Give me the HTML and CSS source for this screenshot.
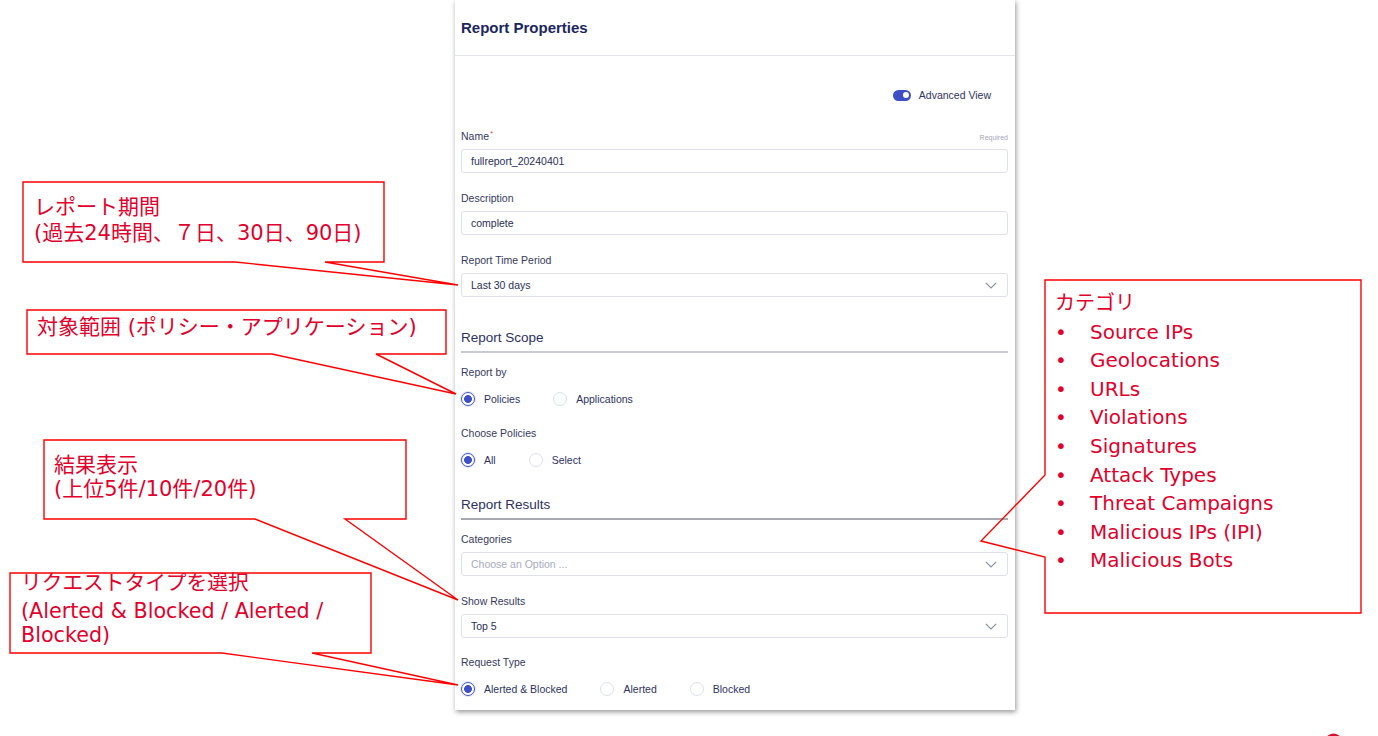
FILE: index.html
```html
<!DOCTYPE html>
<html lang="ja">
<head>
<meta charset="utf-8">
<title>Report Properties</title>
<link rel="stylesheet" href="styles.css">
</head>
<body>
<div class="stage">
  <section class="panel">
    <header class="panel-head"><h1 class="panel-title">Report Properties</h1></header>
    <div class="panel-body">
      <div class="adv">
        <span class="toggle"><span class="knob"></span></span>
        <span class="adv-text">Advanced View</span>
      </div>

      <div class="field first">
        <div class="field-label"><span>Name<sup class="req">*</sup></span><span class="required">Required</span></div>
        <div class="control">fullreport_20240401</div>
      </div>
      <div class="field">
        <div class="field-label"><span>Description</span></div>
        <div class="control">complete</div>
      </div>
      <div class="field">
        <div class="field-label"><span>Report Time Period</span></div>
        <div class="control select"><span>Last 30 days</span><svg class="chev" width="12" height="7" viewBox="0 0 12 7"><polyline points="0.8,0.8 6,6 11.2,0.8"/></svg></div>
      </div>

      <h2 class="section-title scope">Report Scope</h2>
      <div class="rfield first">
        <div class="field-label"><span>Report by</span></div>
        <div class="radio-row">
          <span class="radio-opt"><span class="radio on"></span>Policies</span>
          <span class="radio-opt"><span class="radio"></span>Applications</span>
        </div>
      </div>
      <div class="rfield">
        <div class="field-label"><span>Choose Policies</span></div>
        <div class="radio-row">
          <span class="radio-opt"><span class="radio on"></span>All</span>
          <span class="radio-opt"><span class="radio"></span>Select</span>
        </div>
      </div>

      <h2 class="section-title results">Report Results</h2>
      <div class="field first">
        <div class="field-label"><span>Categories</span></div>
        <div class="control select placeholder"><span>Choose an Option ...</span><svg class="chev" width="12" height="7" viewBox="0 0 12 7"><polyline points="0.8,0.8 6,6 11.2,0.8"/></svg></div>
      </div>
      <div class="field">
        <div class="field-label"><span>Show Results</span></div>
        <div class="control select"><span>Top 5</span><svg class="chev" width="12" height="7" viewBox="0 0 12 7"><polyline points="0.8,0.8 6,6 11.2,0.8"/></svg></div>
      </div>
      <div class="rfield last">
        <div class="field-label"><span>Request Type</span></div>
        <div class="radio-row">
          <span class="radio-opt"><span class="radio on"></span>Alerted &amp; Blocked</span>
          <span class="radio-opt"><span class="radio"></span>Alerted</span>
          <span class="radio-opt"><span class="radio"></span>Blocked</span>
        </div>
      </div>
    </div>
  </section>

  <svg class="overlay" width="1378" height="736" viewBox="0 0 1378 736">
    <path d="M235,262 L23,262 L23,182 L384,182 L384,262 L325,262 L458,285 Z"/>
    <path d="M272,354 L27,354 L27,310 L446,310 L446,354 L376,354 L456,394 Z"/>
    <path d="M255,519 L44,519 L44,440 L406,440 L406,519 L345,519 L458,600 Z"/>
    <path d="M222,653 L10,653 L10,573 L371,573 L371,653 L312,653 L458,685 Z"/>
    <path d="M1045,475 L1045,280 L1361,280 L1361,613 L1045,613 L1045,557 L981,541 Z"/>
    <circle class="logo" cx="1333.5" cy="742.5" r="9"/>
  </svg>

  <div class="callout c1" style="left:34px;top:194px">
    <div>レポート期間</div>
    <div>(過去24時間、７日、30日、90日)</div>
  </div>
  <div class="callout c2" style="left:37px;top:315px">
    <div>対象範囲 (ポリシー・アプリケーション)</div>
  </div>
  <div class="callout c3" style="left:54px;top:453px">
    <div>結果表示</div>
    <div>(上位5件/10件/20件)</div>
  </div>
  <div class="callout c4" style="left:21px;top:571px">
    <div class="c4-head">リクエストタイプを選択</div>
    <div>(Alerted &amp; Blocked / Alerted /</div>
    <div>Blocked)</div>
  </div>
  <div class="callout c5" style="left:1055px;top:289px">
    <div class="c5-head">カテゴリ</div>
    <ul class="cat-list">
      <li><span class="bul">•</span>Source IPs</li>
      <li><span class="bul">•</span>Geolocations</li>
      <li><span class="bul">•</span>URLs</li>
      <li><span class="bul">•</span>Violations</li>
      <li><span class="bul">•</span>Signatures</li>
      <li><span class="bul">•</span>Attack Types</li>
      <li><span class="bul">•</span>Threat Campaigns</li>
      <li><span class="bul">•</span>Malicious IPs (IPI)</li>
      <li><span class="bul">•</span>Malicious Bots</li>
    </ul>
  </div>
</div>
</body>
</html>
```
FILE: styles.css
```css
html, body {
  margin: 0;
  padding: 0;
  background: #ffffff;
}

.stage {
  position: relative;
  width: 1378px;
  height: 736px;
  overflow: hidden;
  background: #ffffff;
  font-family: "Liberation Sans", Arial, sans-serif;
}

/* ---------- panel ---------- */
.panel {
  margin-left: 455px;
  width: 560px;
  background: #ffffff;
  box-shadow: 1px 2px 5px rgba(0, 0, 0, 0.42);
}

.panel-head {
  height: 54px;
  padding-bottom: 1px;
  box-sizing: content-box;
  border-bottom: 1px solid #e3e5ee;
  display: flex;
  align-items: center;
  padding-left: 6px;
}

.panel-title {
  margin: 0;
  font-size: 15px;
  font-weight: 700;
  color: #1c2660;
}

.panel-body {
  padding: 0 7px 11px 6px;
}

.adv {
  margin-top: 32px;
  height: 14px;
  display: flex;
  justify-content: flex-end;
  align-items: center;
  gap: 8px;
  padding-right: 17px;
}

.toggle {
  width: 18px;
  height: 11px;
  border-radius: 6px;
  background: #3e4fc6;
  display: flex;
  align-items: center;
  justify-content: flex-end;
  padding-right: 2px;
  box-sizing: border-box;
}

.knob {
  width: 6px;
  height: 6px;
  border-radius: 50%;
  background: #ffffff;
}

.adv-text {
  font-size: 10.5px;
  color: #2f3561;
}

/* ---------- fields ---------- */
.field { margin-top: 18px; }
.field.first { margin-top: 27px; }
.section-title + .field.first,
.section-title + .rfield.first { margin-top: 12px; }

.field-label {
  height: 14px;
  line-height: 14px;
  font-size: 10.5px;
  color: #353a60;
  display: flex;
  justify-content: space-between;
  align-items: flex-end;
}

.req {
  color: #e5483c;
  font-size: 8px;
  line-height: 0;
  vertical-align: 4px;
  margin-left: 1px;
}

.required {
  font-size: 7px;
  line-height: 10px;
  color: #a3a7b8;
}

.control {
  margin-top: 6px;
  height: 24px;
  box-sizing: border-box;
  border: 1px solid #dfe1ea;
  border-radius: 3px;
  padding: 0 10px 0 9px;
  display: flex;
  align-items: center;
  font-size: 10.5px;
  color: #2a2f58;
}

.control.select { justify-content: space-between; }
.control.placeholder { color: #a7abc0; }

.chev polyline {
  fill: none;
  stroke: #8a8fa8;
  stroke-width: 1.2;
}

.section-title {
  margin: 32px 0 0;
  font-size: 13.5px;
  font-weight: 400;
  line-height: 18px;
  padding-bottom: 4px;
  color: #2b3160;
  border-bottom: 2px solid #c9cbd2;
}

.section-title.results {
  margin-top: 26px;
  border-bottom-color: #a7a9b2;
}

.rfield { margin-top: 17px; }

.radio-row {
  margin-top: 10px;
  height: 20px;
  display: flex;
  align-items: center;
}

.radio-opt {
  display: flex;
  align-items: center;
  gap: 9px;
  margin-right: 33px;
  font-size: 10.5px;
  color: #2d3262;
}

.radio {
  width: 14px;
  height: 14px;
  border-radius: 50%;
  border: 1px solid #dcdfe8;
  box-sizing: border-box;
  background: #ffffff;
}

.radio.on {
  border: 1.5px solid #4051c8;
  box-shadow: 0 0 0 1px rgba(64, 81, 200, 0.15);
  background: radial-gradient(circle, #3f50c6 0 3.6px, #ffffff 4.2px);
}

/* ---------- annotations ---------- */
.overlay {
  position: absolute;
  left: 0;
  top: 0;
  pointer-events: none;
}

.overlay path {
  fill: none;
  stroke: #ff0000;
  stroke-width: 1.4;
  stroke-linejoin: miter;
}

.overlay .logo {
  fill: #d6102c;
}

.callout {
  position: absolute;
  color: #e2002c;
  font-family: "DejaVu Sans", "Noto Sans CJK JP", sans-serif;
  font-size: 21px;
  white-space: nowrap;
}

.c1 { line-height: 26px; }
.c2 { line-height: 24px; }
.c3 { line-height: 24px; }
.c4 { line-height: 24px; font-size: 20.7px; }
.c4-head { margin-bottom: 4px; }

.c5 { line-height: 28.6px; font-size: 20px; }

.cat-list {
  list-style: none;
  margin: 0;
  padding: 0;
}

.cat-list li {
  display: flex;
}

.bul {
  display: inline-block;
  width: 35px;
}
```
